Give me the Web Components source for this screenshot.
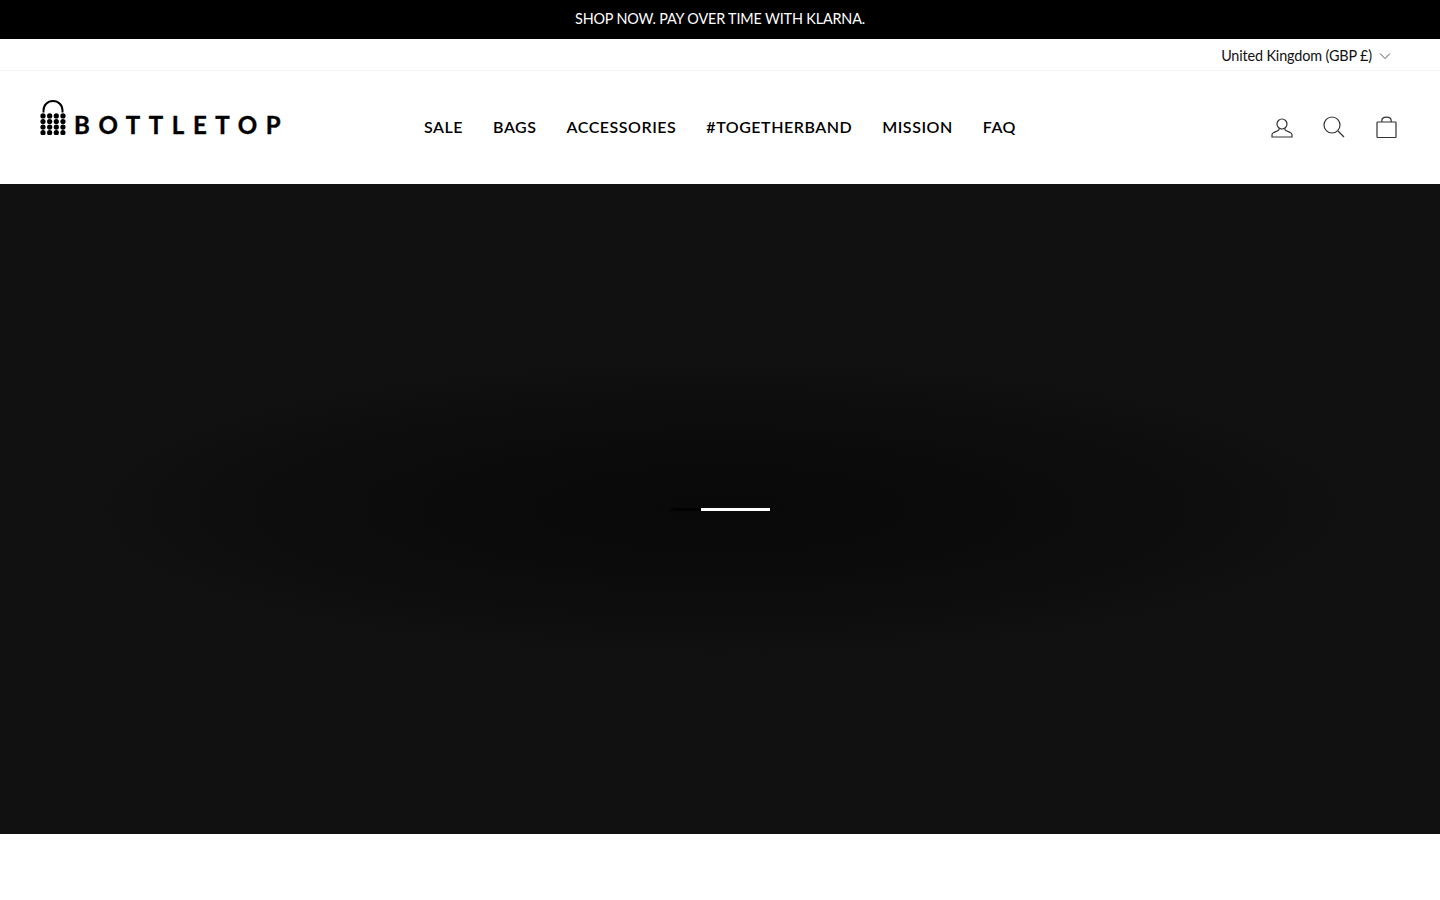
<!DOCTYPE html>
<html lang="en"><head><meta charset="utf-8"><title>Bottletop</title>
<style>
html,body{margin:0;padding:0;background:#fff;font-family:Lato,sans-serif;color:#000}
</style></head><body>
<site-announcement>SHOP NOW. PAY OVER TIME WITH KLARNA.</site-announcement>
<site-topbar>United Kingdom (GBP £)</site-topbar>
<site-header>
  <a slot="nav" href="#">SALE</a><a slot="nav" href="#">BAGS</a><a slot="nav" href="#">ACCESSORIES</a><a slot="nav" href="#">#TOGETHERBAND</a><a slot="nav" href="#">MISSION</a><a slot="nav" href="#">FAQ</a>
</site-header>
<site-hero></site-hero>
<script>
class SiteAnnouncement extends HTMLElement{constructor(){super();this.attachShadow({mode:'open'}).innerHTML=`<style>
:host{display:block;height:39px;background:#000;color:#fff;font:400 14.4px/37px Lato,sans-serif;letter-spacing:-.16px;text-align:center}
</style><slot></slot>`}}
class SiteTopbar extends HTMLElement{constructor(){super();this.attachShadow({mode:'open'}).innerHTML=`<style>
:host{display:flex;justify-content:flex-end;align-items:center;gap:7px;box-sizing:border-box;height:32px;padding:4px 49px 0 0;border-bottom:1px solid #f4f4f4;font:400 14.4px/1 Lato,sans-serif;letter-spacing:-.14px;color:#111}
svg{display:block;width:12px;height:12px;margin-top:-1px}
</style><slot></slot><svg viewBox="0 0 12 12" fill="none" stroke="#555" stroke-width="1"><path d="M1 3.5l5 5 5-5"/></svg>`}}
class SiteLogo extends HTMLElement{constructor(){super();
const dots=[];for(let r=0;r<4;r++)for(let c=0;c<4;c++)dots.push(`<circle cx="${3+c*6.65}" cy="${15.900+r*5.600}" r="2.600"/>`);
this.attachShadow({mode:'open'}).innerHTML=`<style>
:host{display:flex;align-items:flex-end;width:242px;height:36px;color:#000}
svg{display:block;width:26px;height:35px;flex:none}
span{font:700 24px/20px Lato,sans-serif;letter-spacing:8.6px;margin-left:8px;white-space:nowrap;-webkit-text-stroke:.4px #000}
</style><svg viewBox="0 0 26 35"><path d="M3.500 12.500V10.500C3.500 5 7.500 1 13 1s9.500 4 9.500 9.500v2" fill="none" stroke="#000" stroke-width="2"/>${dots.join('')}</svg><span>BOTTLETOP</span>`}}
class SiteHeader extends HTMLElement{constructor(){super();this.attachShadow({mode:'open'}).innerHTML=`<style>
:host{display:grid;grid-template-columns:1fr auto 1fr;align-items:center;box-sizing:border-box;height:113px;padding:0 40px}
.logo{margin-top:-22px}
nav{display:flex;gap:30px;margin-top:-2px}
::slotted(a){color:#000;text-decoration:none;font:600 16px/1 Lato,sans-serif;letter-spacing:.53px}
.icons{display:flex;justify-content:flex-end;gap:22px;margin:-2px -1px 0 0}
.icons svg{display:block;width:30px;height:30px;fill:none;stroke:#333;stroke-width:1.200}
</style><div class="logo"><site-logo></site-logo></div>
<nav><slot name="nav"></slot></nav>
<div class="icons">
<svg viewBox="0 0 30 30"><circle cx="15" cy="12" r="5"/><path d="M12 16.500v1c0 1-2.800 2-5.200 3-1.400.6-1.800 1.200-1.800 2.100V25h20v-2.400c0-.9-.4-1.500-1.800-2.100-2.400-1-5.200-2-5.200-3v-1"/></svg>
<svg viewBox="0 0 30 30"><circle cx="13" cy="13" r="8"/><path d="M19 19l6 6"/></svg>
<svg viewBox="0 0 30 30"><rect x="6" y="10" width="19" height="15.500" rx=".8"/><path d="M10.800 10V8.700c0-2 2-3.500 4.700-3.500s4.700 1.500 4.700 3.500V10"/></svg>
</div>`}}
class SiteHero extends HTMLElement{constructor(){super();this.attachShadow({mode:'open'}).innerHTML=`<style>
:host{display:flex;align-items:center;justify-content:center;height:650px;background:radial-gradient(ellipse 640px 150px at 720px 325px,#090909 0%,#0b0b0b 45%,#0f0f0f 85%,#111 100%),#111}
.bar{display:flex;width:101px;height:3px;margin-left:-1px}
.bar i{display:block;height:3px}
.a{width:32px;background:linear-gradient(90deg,#080808,#000 25%)}
.b{width:69px;background:#fff}
</style><div class="bar"><i class="a"></i><i class="b"></i></div>`}}
customElements.define('site-announcement',SiteAnnouncement);
customElements.define('site-topbar',SiteTopbar);
customElements.define('site-logo',SiteLogo);
customElements.define('site-header',SiteHeader);
customElements.define('site-hero',SiteHero);
</script>
</body></html>
